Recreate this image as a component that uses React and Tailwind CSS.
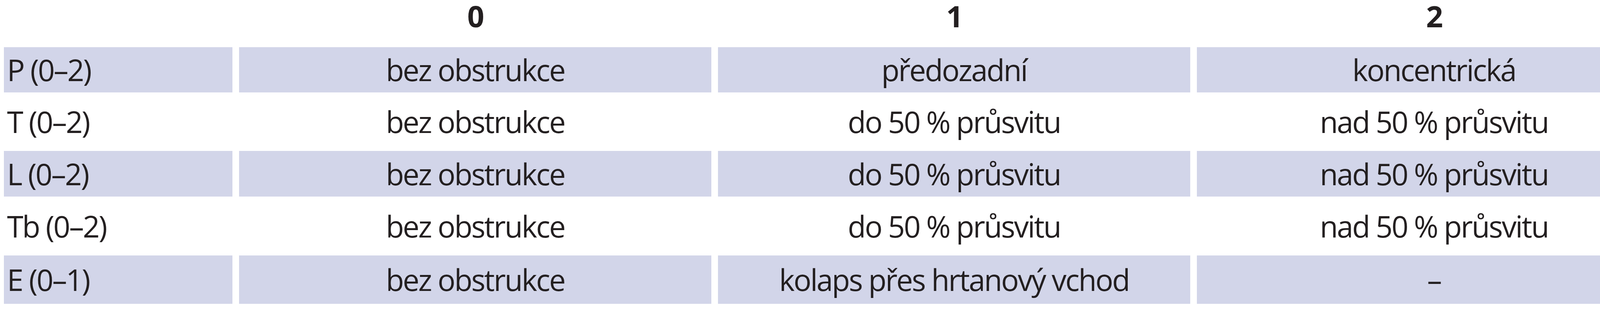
const header = ["", "0", "1", "2"];

const rows = [
  ["P (0–2)", "bez obstrukce", "předozadní", "koncentrická"],
  ["T (0–2)", "bez obstrukce", "do 50 % průsvitu", "nad 50 % průsvitu"],
  ["L (0–2)", "bez obstrukce", "do 50 % průsvitu", "nad 50 % průsvitu"],
  ["Tb (0–2)", "bez obstrukce", "do 50 % průsvitu", "nad 50 % průsvitu"],
  ["E (0–1)", "bez obstrukce", "kolaps přes hrtanový vchod", "–"],
];

const App = () => {
  return (
    <div
      className="w-[4283px] h-[800px] bg-white text-[#231f20] pl-[10px]"
      style={{ fontFamily: '"Open Sans", "Noto Sans", sans-serif' }}
    >
      <div className="grid grid-cols-[585px_1209px_1209px_1214px] grid-rows-[104px_116px_116px_117px_117px_124px] gap-x-[17px] gap-y-[17px] text-[76px] leading-[76px] tracking-[-3px]">
        {header.map((h, i) => (
          <div key={"h" + i} className="flex justify-center pt-[3px] font-bold">
            {h}
          </div>
        ))}
        {rows.map((row, r) =>
          row.map((cell, c) => (
            <div
              key={r + "-" + c}
              className={
                "flex items-center " +
                (c === 0 ? "justify-start pl-[8px] " : "justify-center ") +
                (r % 2 === 0 ? "bg-[#d2d5e9]" : "bg-white")
              }
            >
              {cell}
            </div>
          ))
        )}
      </div>
    </div>
  );
};

export default App;
